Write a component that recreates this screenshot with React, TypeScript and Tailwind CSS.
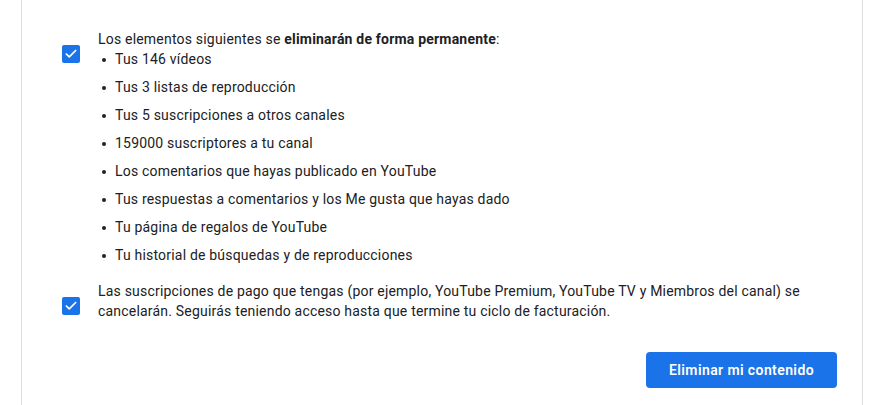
import { Check } from "lucide-react"

const items = [
  "Tus 146 vídeos",
  "Tus 3 listas de reproducción",
  "Tus 5 suscripciones a otros canales",
  "159000 suscriptores a tu canal",
  "Los comentarios que hayas publicado en YouTube",
  "Tus respuestas a comentarios y los Me gusta que hayas dado",
  "Tu página de regalos de YouTube",
  "Tu historial de búsquedas y de reproducciones",
]

function Box() {
  return (
    <div className="mt-4 flex size-[18px] shrink-0 items-center justify-center rounded-[2px] bg-[#1a73e8] text-white">
      <Check className="size-[14px]" strokeWidth={3} />
    </div>
  )
}

export default function App() {
  return (
    <div className="h-[405px] w-[893px] overflow-hidden bg-white font-['Roboto',sans-serif] text-sm leading-5 tracking-[0.2px] text-[#202124]">
      <div className="ml-[21px] h-full w-[842px] border-x border-[#dadce0] pl-10 pr-[25px] pt-[29px]">
        <div className="flex gap-[18px]">
          <Box />
          <div>
            <p>
              Los elementos siguientes se <b className="font-bold">eliminarán de forma permanente</b>:
            </p>
            <ul className="space-y-2">
              {items.map((t) => (
                <li key={t} className="flex items-center">
                  <span className="ml-[4px] mr-[9px] mt-[1px] size-[4px] rounded-full bg-[#202124]" />
                  <span>{t}</span>
                </li>
              ))}
            </ul>
          </div>
        </div>
        <div className="mt-4 flex gap-[18px]">
          <Box />
          <p>
            Las suscripciones de pago que tengas (por ejemplo, YouTube Premium, YouTube TV y Miembros del canal) se
            cancelarán. Seguirás teniendo acceso hasta que termine tu ciclo de facturación.
          </p>
        </div>
        <div className="mt-[31px] flex justify-end">
          <button className="h-9 w-[191px] rounded bg-[#1a73e8] text-sm font-semibold tracking-[0.4px] text-white">
            Eliminar mi contenido
          </button>
        </div>
      </div>
    </div>
  )
}
